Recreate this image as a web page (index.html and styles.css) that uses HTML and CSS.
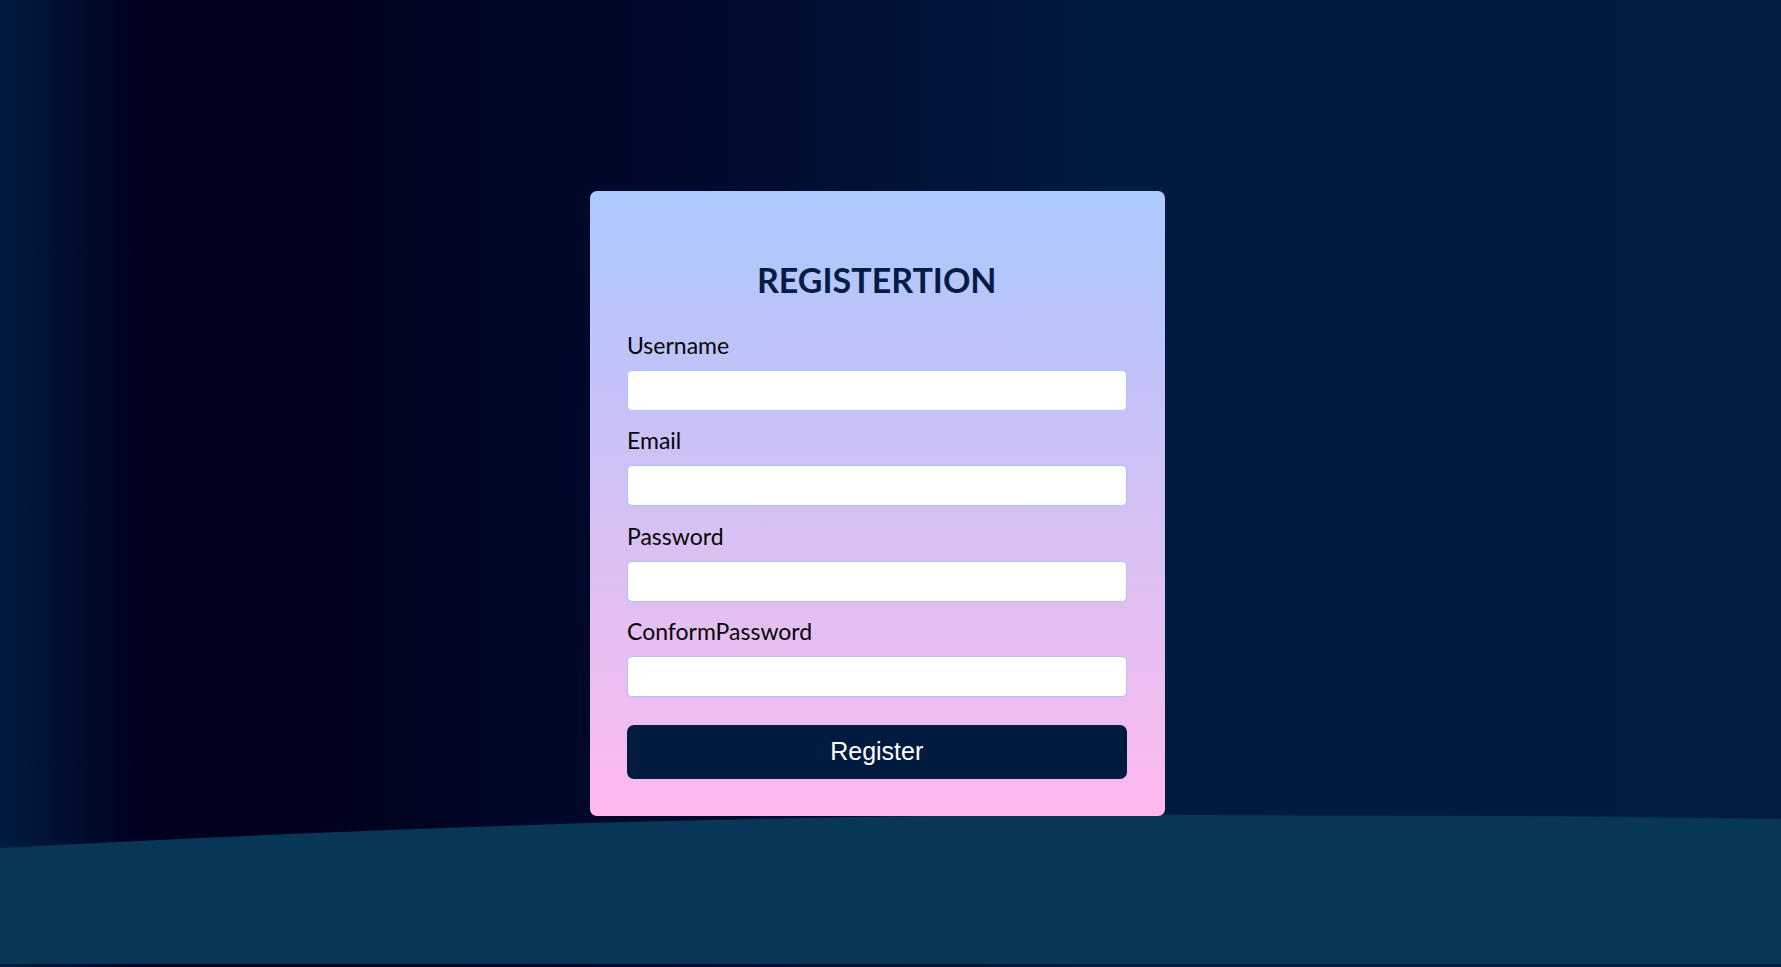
FILE: index.html
```html
<!DOCTYPE html>
<html lang="en">
<head>
<meta charset="utf-8">
<title>Registration</title>
<link rel="stylesheet" href="styles.css">
</head>
<body>
<svg class="wave" viewBox="0 0 1781 151" preserveAspectRatio="none" aria-hidden="true">
  <path d="M0 35 Q 700 -3 1300 2.5 Q 1550 2 1781 6 L1781 151 L0 151 Z" fill="#073656"/>
</svg>
<main class="page">
  <section class="card">
    <h1 class="title">REGISTERTION</h1>
    <form class="form">
      <div class="field">
        <label class="label" for="username">Username</label>
        <input class="input" id="username" type="text">
      </div>
      <div class="field">
        <label class="label" for="email">Email</label>
        <input class="input" id="email" type="email">
      </div>
      <div class="field">
        <label class="label" for="password">Password</label>
        <input class="input" id="password" type="password">
      </div>
      <div class="field">
        <label class="label" for="confirm">ConformPassword</label>
        <input class="input" id="confirm" type="password">
      </div>
      <button class="btn" type="button">Register</button>
    </form>
  </section>
</main>
</body>
</html>
```

FILE: styles.css
```css
* { box-sizing: border-box; }

html, body {
  margin: 0;
  height: 100%;
}

body {
  position: relative;
  overflow: hidden;
  background: linear-gradient(90deg, #011c41 0%, #00001f 8%, #00031f 20%, #000a2e 40%, #011a40 62%, #001c40 100%);
  font-family: Lato, "Open Sans", sans-serif;
}

.wave {
  position: absolute;
  left: 0;
  bottom: 3px;
  width: 100%;
  height: 151px;
  display: block;
}

.page {
  position: relative;
  z-index: 1;
  display: flex;
  justify-content: center;
  padding: 191px 27px 0 0;
}

.card {
  width: 575px;
  padding: 38px 38px 37px 37.5px;
  border-radius: 7px;
  background: linear-gradient(180deg, #abcaff 0%, #c2c2f8 30%, #dcc0f2 60%, #feb9ee 100%);
}

.title {
  margin: 29.5px 0 31.3px;
  font-family: Lato, sans-serif;
  font-weight: 700;
  font-size: 34px;
  line-height: 42px;
  text-align: center;
  color: #021c46;
}

.form {
  display: flex;
  flex-direction: column;
}

.field {
  display: flex;
  flex-direction: column;
  margin-bottom: 16.3px;
}

.field:last-of-type { margin-bottom: 0; }

.label {
  display: block;
  font-size: 23px;
  line-height: 27px;
  margin-bottom: 11.2px;
  color: #050505;
}

.input {
  width: 100%;
  height: 41px;
  border: 1px solid #a7c5fb;
  border-radius: 5px;
  background: #fff;
  outline: none;
}

.btn {
  margin-top: 27.5px;
  width: 100%;
  height: 54px;
  border: none;
  border-radius: 7px;
  background: #011b40;
  color: #fff;
  font-family: "Liberation Sans", Arial, sans-serif;
  font-size: 25px;
}
```
